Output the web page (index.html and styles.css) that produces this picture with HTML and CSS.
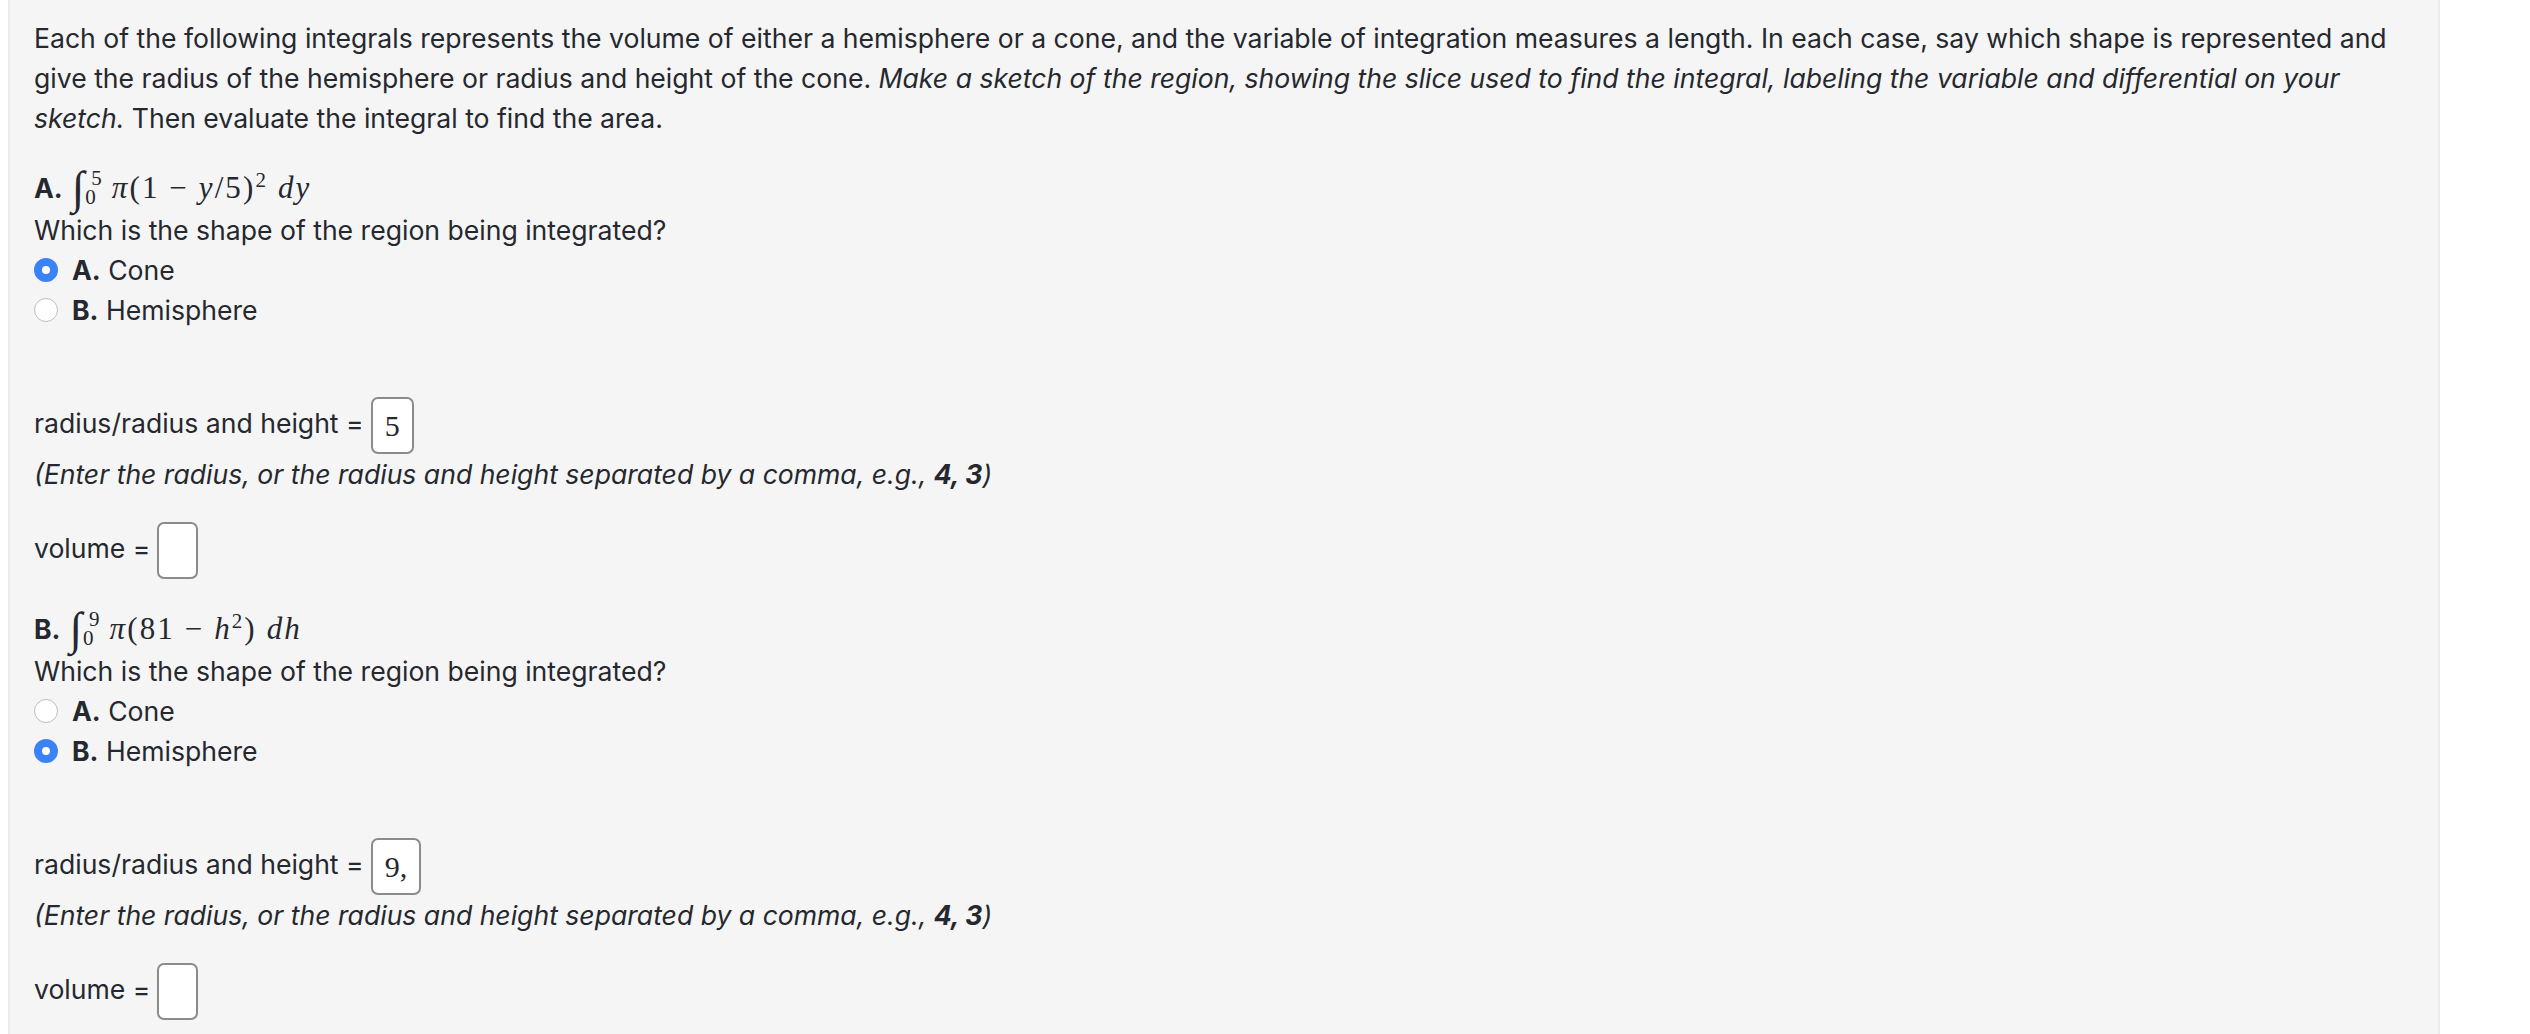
FILE: index.html
```html
<!DOCTYPE html>
<html lang="en">
<head>
    <meta charset="UTF-8">
    <title>Integrals</title>
    <link rel="stylesheet" href="styles.css">
</head>
<body>
    <div class="panel">
        <p class="intro">Each of the following integrals represents the volume of either a hemisphere or a cone, and the variable of integration measures a length. In each case, say which shape is represented and give the radius of the hemisphere or radius and height of the cone. <em>Make a sketch of the region, showing the slice used to find the integral, labeling the variable and differential on your sketch.</em> Then evaluate the integral to find the area.</p>

        <div class="part">
            <div class="math-line">
                <b>A.</b>
                <span class="math">
                    <span class="int">∫</span>
                    <span class="limits"><span>5</span><span>0</span></span>
                    <span class="expr"><i>π</i>(1 − <i>y</i>/5)<sup>2</sup> <i>dy</i></span>
                </span>
            </div>
            <div class="line">Which is the shape of the region being integrated?</div>
            <div class="option"><span class="radio checked"></span><span><b>A.</b> Cone</span></div>
            <div class="option"><span class="radio"></span><span><b>B.</b> Hemisphere</span></div>
            <div class="answer first"><span class="label">radius/radius and height =</span><span class="box">5</span></div>
            <div class="line"><em>(Enter the radius, or the radius and height separated by a comma, e.g., <b>4, 3</b>)</em></div>
            <div class="answer"><span class="label">volume =</span><span class="box empty"></span></div>
        </div>

        <div class="part">
            <div class="math-line">
                <b>B.</b>
                <span class="math">
                    <span class="int">∫</span>
                    <span class="limits"><span>9</span><span>0</span></span>
                    <span class="expr"><i>π</i>(81 − <i>h</i><sup>2</sup>) <i>dh</i></span>
                </span>
            </div>
            <div class="line">Which is the shape of the region being integrated?</div>
            <div class="option"><span class="radio"></span><span><b>A.</b> Cone</span></div>
            <div class="option"><span class="radio checked"></span><span><b>B.</b> Hemisphere</span></div>
            <div class="answer first"><span class="label">radius/radius and height =</span><span class="box">9,</span></div>
            <div class="line"><em>(Enter the radius, or the radius and height separated by a comma, e.g., <b>4, 3</b>)</em></div>
            <div class="answer"><span class="label">volume =</span><span class="box empty"></span></div>
        </div>
    </div>
</body>
</html>
```

FILE: styles.css
```css
html, body {
    margin: 0;
    height: 100%;
    overflow: hidden;
    background: #fff;
}

body {
    padding-left: 8px;
    font-family: Inter, sans-serif;
    font-size: 26.58px;
    line-height: 40px;
    color: #25282e;
}

.panel {
    box-sizing: border-box;
    width: 2432px;
    height: 1034px;
    padding: 18px 24px 0 24px;
    background: #f5f5f5;
    border-left: 2px solid #ebebeb;
    border-right: 2px solid #ebebeb;
}

.intro {
    margin: 0 0 28px;
}

.part {
    margin-bottom: 28px;
}

.math-line {
    height: 43.5px;
    display: flex;
    align-items: center;
    gap: 9px;
}

.math {
    display: flex;
    align-items: center;
    font-family: "Liberation Serif", serif;
    font-size: 31px;
}

.int {
    font-size: 46px;
    font-style: italic;
    line-height: 44px;
}

.limits {
    display: flex;
    flex-direction: column;
    font-size: 21px;
    line-height: 18px;
    margin: 0 10px 0 1px;
}

.limits span:first-child {
    margin-left: 6px;
    margin-bottom: 1px;
}

.expr {
    white-space: pre;
    letter-spacing: 2.1px;
}

.expr sup {
    font-size: 21px;
    line-height: 0;
}

.option {
    height: 40px;
    display: flex;
    align-items: center;
    gap: 14px;
}

.radio {
    box-sizing: border-box;
    width: 24px;
    height: 24px;
    border-radius: 50%;
    background: #fff;
    border: 1px solid #bdbdbd;
}

.radio.checked {
    background: #fff;
    border: 8px solid #3b82f6;
}

.answer {
    height: 57px;
    display: flex;
    align-items: center;
    gap: 7px;
}

.answer.first {
    margin-top: 67.5px;
}

.answer:last-child {
    margin-top: 28px;
}

.label {
    margin-bottom: 5px;
}

.box {
    box-sizing: border-box;
    height: 57px;
    min-width: 41px;
    padding: 0 12px;
    display: flex;
    align-items: center;
    background: #fff;
    border: 2px solid #8b8b8b;
    border-radius: 7px;
    font-family: "Liberation Serif", serif;
    font-size: 30px;
}
```
